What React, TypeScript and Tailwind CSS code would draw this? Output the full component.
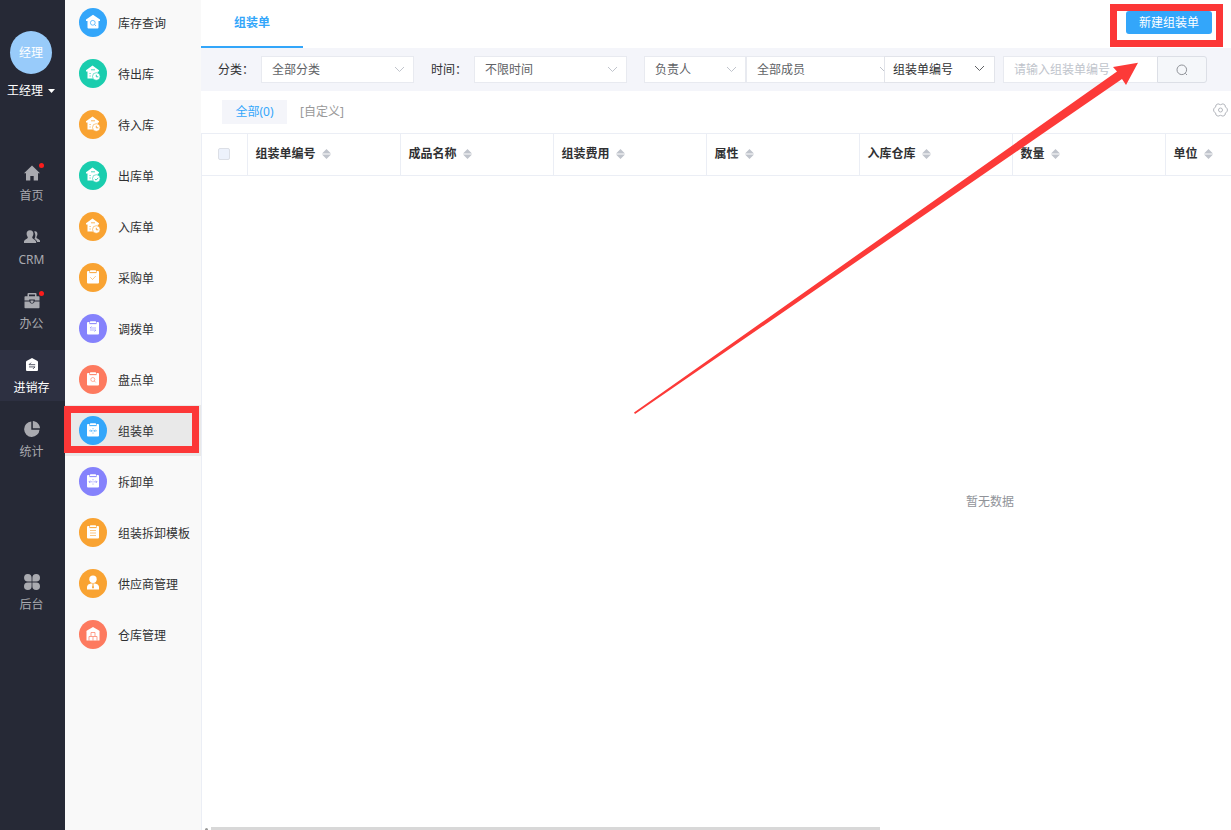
import { ReactNode } from "react";

type Glyph = "houseSearch" | "houseOut" | "houseIn" | "houseCheck" | "houseClock" | "check" | "swap" | "search" | "merge" | "split" | "lines" | "person" | "depot";

const BLUE = "bg-[#33a6fa] text-[#33a6fa]";
const GREEN = "bg-[#1acdae] text-[#1acdae]";
const ORANGE = "bg-[#f9a332] text-[#f9a332]";
const PURPLE = "bg-[#8582fc] text-[#8582fc]";
const CORAL = "bg-[#fd7a5f] text-[#fd7a5f]";

const menu: { label: string; glyph: Glyph; color: string; active?: boolean }[] = [
  { label: "库存查询", glyph: "houseSearch", color: BLUE },
  { label: "待出库", glyph: "houseOut", color: GREEN },
  { label: "待入库", glyph: "houseIn", color: ORANGE },
  { label: "出库单", glyph: "houseCheck", color: GREEN },
  { label: "入库单", glyph: "houseClock", color: ORANGE },
  { label: "采购单", glyph: "check", color: ORANGE },
  { label: "调拨单", glyph: "swap", color: PURPLE },
  { label: "盘点单", glyph: "search", color: CORAL },
  { label: "组装单", glyph: "merge", color: BLUE, active: true },
  { label: "拆卸单", glyph: "split", color: PURPLE },
  { label: "组装拆卸模板", glyph: "lines", color: ORANGE },
  { label: "供应商管理", glyph: "person", color: ORANGE },
  { label: "仓库管理", glyph: "depot", color: CORAL },
];

const columns = ["组装单编号", "成品名称", "组装费用", "属性", "入库仓库", "数量", "单位", "", "", ""];

/* White shapes; cut-outs are drawn in currentColor, the colour of the round badge */
const boardMarks: Partial<Record<Glyph, ReactNode>> = {
  check: <path d="M5.300 8.300l2.200 2.200 3.300-3.500" />,
  swap: <path d="M11 8H5l1.600-1.600M5 10h6l-1.600 1.600" />,
  search: <><circle cx="7.800" cy="8.500" r="2" /><path d="M9.300 10l1.400 1.400" /></>,
  merge: <><path d="M8 6v1.300M8 8.200v1.300M8 10.500v1.200" /><path d="M4 8.800h3M5.700 7.600l1.200 1.200-1.200 1.200M12 8.800H9M10.300 7.600L9.100 8.800l1.200 1.200" /></>,
  split: <><path d="M8 6v1.300M8 8.200v1.300M8 10.500v1.200" /><path d="M4 8.800h3M5.200 7.600L4 8.800l1.200 1.200M12 8.800H9M10.800 7.600L12 8.800l-1.200 1.200" /></>,
  lines: <path d="M5 6.500h6M5 9h6M5 11.500h6" />,
};

const badgeMarks: Partial<Record<Glyph, ReactNode>> = {
  houseOut: <path d="M11.300 9.800v2h2" />,
  houseIn: <path d="M11.300 9.800v2h2" />,
  houseCheck: <path d="M9.800 12l1.300 1.100 2.200-2.300" />,
  houseClock: <path d="M11.300 9.800v2h2" />,
};

function MenuGlyph({ name }: { name: Glyph }) {
  const svg = "size-4";
  if (boardMarks[name]) {
    return (
      <svg className={svg} viewBox="0 0 16 16" fill="none">
        <path d="M3 2h2v2h6V2h2a1 1 0 011 1v10.500a1 1 0 01-1 1H3a1 1 0 01-1-1V3a1 1 0 011-1z" fill="#fff" />
        <path d="M5.600 1.200h4.800a.6.6 0 01.6.6v1.400H5V1.800a.6.6 0 01.6-.6z" fill="#fff" />
        <g stroke="currentColor" strokeWidth="0.6">
          <path d="M4.500 1.500v2.200h7V1.500" />
          {boardMarks[name]}
        </g>
      </svg>
    );
  }
  if (badgeMarks[name]) {
    return (
      <svg className={svg} viewBox="0 0 16 16" fill="none">
        <path d="M7.500 .6L14 5.200v1.300h-1.200V13.500H2.500V6.500H1V5.200z" fill="#fff" />
        <path d="M6 4.800h4M4.500 8.500h1.200M4.500 11h1.200" stroke="currentColor" strokeWidth="0.8" />
        <circle cx="11.300" cy="11.500" r="3.800" fill="#fff" stroke="currentColor" strokeWidth="0.6" />
        <g stroke="currentColor" strokeWidth="0.9">{badgeMarks[name]}</g>
      </svg>
    );
  }
  if (name === "houseSearch") {
    return (
      <svg className={svg} viewBox="0 0 16 16" fill="none">
        <path d="M8 .8l7 4.800v1.400h-1.500v6.500a1 1 0 01-1 1h-9a1 1 0 01-1-1V7H1V5.600z" fill="#fff" />
        <circle cx="7.800" cy="8.800" r="2.400" stroke="currentColor" strokeWidth="0.7" />
        <path d="M9.500 10.500l1.500 1.500" stroke="currentColor" strokeWidth="0.7" />
      </svg>
    );
  }
  if (name === "person") {
    return (
      <svg className={svg} viewBox="0 0 16 16" fill="#fff">
        <circle cx="8" cy="4.300" r="3.700" />
        <path d="M2 14.500V12C2 9.800 4 8.800 6 8.400h4c2 .4 4 1.400 4 3.600v2.500z" />
        <path d="M7.300 8.800h1.400l-.3 1.200.6 2.600-1 1.200-1-1.200.6-2.600z" fill="currentColor" />
      </svg>
    );
  }
  return (
    <svg className={svg} viewBox="0 0 16 16" fill="none">
      <path d="M1.500 14.500V5.200q0-.5.500-.8L8 1l6 3.400q.5.300.5.800v9.300z" fill="#fff" />
      <path d="M4 14.500v-4h8v4M8 14.500v-4M6 10.500v-4h4v4" stroke="currentColor" strokeWidth="0.7" />
    </svg>
  );
}

function NavItem({ label, dot, active, children }: { label: string; dot?: boolean; active?: boolean; children: ReactNode }) {
  return (
    <a href="#" className={`relative flex h-[51px] flex-col items-center pt-[7px] pr-0.5 text-xs ${active ? "bg-[#2d3041] text-white" : "text-[#a9aab0]"}`}>
      <svg className="size-4" viewBox="0 0 16 16" fill="currentColor">{children}</svg>
      {dot && <span className="absolute top-[5px] left-[39px] size-[5px] rounded-full bg-[#fb1c1c]" />}
      <span className="mt-[7px] leading-4">{label}</span>
    </a>
  );
}

function Chevron({ className }: { className: string }) {
  return (
    <svg className={`pointer-events-none absolute h-[7px] w-[11px] ${className}`} viewBox="0 0 11 7" fill="none" stroke="currentColor">
      <path d="M1 1l4.500 4.500L10 1" />
    </svg>
  );
}

function Picker({ id, value, width, label }: { id: string; value: string; width: string; label?: string }) {
  return (
    <div className={`relative shrink-0 ${width}`}>
      <select id={id} aria-label={label} className="block h-[27px] w-full appearance-none border border-[#e8eaf0] bg-white pl-2.5 text-[#606266] outline-none">
        <option>{value}</option>
      </select>
      <Chevron className="top-[10px] right-[9px] text-[#c0c4cc]" />
    </div>
  );
}

export default function App() {
  return (
    <div className="flex h-screen overflow-hidden bg-white font-['Noto_Sans','Noto_Sans_CJK_SC',sans-serif] text-xs text-[#303133]">
      {/* Primary navigation */}
      <nav className="flex w-[65px] shrink-0 flex-col bg-[#262936]">
        <div className="mt-[31px] ml-[10px] flex h-[43px] w-[42px] items-center justify-center rounded-[50%] bg-[#98cbfa] text-white">经理</div>
        <button className="mt-2 flex h-[18px] items-center gap-[5px] pl-[7px] text-white">
          王经理
          <svg className="h-1 w-[7px]" viewBox="0 0 7 4" fill="currentColor"><path d="M0 0h7L3.500 4z" /></svg>
        </button>
        <div className="mt-[58px] flex flex-col gap-[13px]">
          <NavItem label="首页" dot>
            <path d="M8 .5L0 8.300h2V15.500h4.300V11h3.400v4.500H14V8.300h2z" />
          </NavItem>
          <NavItem label="CRM">
            <path d="M10.200 2.500c2-.8 3.400.7 3.200 2.800-.1 1.600-.9 2.300-1 3.200 0 1.400 4.100 1.500 4.100 4.500h-3.300c-.4-2-2.600-2.500-2.700-3.400.9-1.400 1.400-3.600-.3-7.100z" />
            <path d="M6 1.200c2.300 0 3.500 1.500 3.400 3.700-.1 1.700-1.200 2.600-1.200 3.700 0 1.600 4 1.700 4.100 5.400H-.5c.1-3.700 4.300-3.800 4.300-5.400 0-1.100-1.100-2-1.200-3.700C2.500 2.700 3.700 1.200 6 1.200z" />
          </NavItem>
          <NavItem label="办公" dot>
            <path d="M4.500 0h7a1 1 0 011 1v2.200H11V1.500H5v1.700H3.500V1a1 1 0 011-1zM1.300 3.200h13.400a.8.800 0 01.8.8v3.500h-4.700V6.500H5.200v1H.5V4a.8.800 0 01.8-.8zM.5 8.500h5c.4 2.800 4.600 2.800 5 0h5V14.500a.8.800 0 01-.8.800H1.300a.8.800 0 01-.8-.8z" />
            <path d="M6.500 7.500h3v1.200c0 1.600-3 1.600-3 0z" />
          </NavItem>
          <NavItem label="进销存" active>
            <path d="M8 1l5.500 3q.5.300.5 1v8a1 1 0 01-1 1H3a1 1 0 01-1-1V5q0-.7.500-1z" />
            <path d="M11.200 7.700H5l2-2M5 9.900h6l-2 2" fill="none" stroke="#2d3041" strokeWidth="0.8" />
          </NavItem>
          <NavItem label="统计">
            <path d="M7.300.5v8.200h8.200A7.700 7.700 0 117.300.5z" />
            <path d="M8.800 0c3.800.2 7 3.400 7.200 7.200H8.800z" />
          </NavItem>
        </div>
        <div className="mt-[102px]">
          <NavItem label="后台">
            <path d="M3.900 0a3.800 3.800 0 013.700 3.800v3.800H3.800A3.800 3.800 0 013.900 0zM12.200 0a3.800 3.800 0 010 7.600H8.400V3.800A3.800 3.800 0 0112.200 0zM3.800 8.400h3.800v3.800a3.800 3.800 0 11-3.800-3.800zM8.400 8.400h3.800a3.800 3.800 0 11-3.800 3.800z" />
          </NavItem>
        </div>
      </nav>

      {/* Module menu */}
      <aside className="w-[136px] shrink-0 bg-[#f9f9f9]">
        <ul className="-mt-[3px]">
          {menu.map(item => (
            <li key={item.label} className={`relative ${item.active ? "bg-[#e9e9e9]" : ""}`}>
              <a href="#" className="flex h-[51px] items-center gap-[11px] pl-3.5 whitespace-nowrap">
                <span className={`flex h-[29px] w-7 shrink-0 items-center justify-center rounded-[50%] pb-0.5 ${item.color}`}>
                  <MenuGlyph name={item.glyph} />
                </span>
                <span className="pt-0.5">{item.label}</span>
              </a>
              {item.active && <span className="pointer-events-none absolute top-px -left-px z-10 h-[47px] w-[135px] border-[7px] border-[#fc3737]" />}
            </li>
          ))}
        </ul>
      </aside>

      <main className="relative flex min-w-0 flex-1 flex-col">
        {/* Tab header */}
        <header className="flex h-12 shrink-0 items-start justify-between">
          <a href="#" className="flex h-12 w-[102px] items-center justify-center border-b-2 border-[#33a6fa] font-bold text-[#33a6fa]">组装单</a>
          <div className="relative mt-[11px] mr-[19px]">
            <button className="block h-[23px] w-[86px] rounded-[3px] bg-[#33a6fa] text-white">新建组装单</button>
            <span className="pointer-events-none absolute -top-[7px] -left-4 h-[43px] w-[113px] border-[7px] border-[#fc3737]" />
          </div>
        </header>

        {/* Filters */}
        <div className="flex h-[43px] shrink-0 items-center bg-[#f4f5fa] pl-[17px]">
          <label htmlFor="category" className="w-[43px] shrink-0">分类：</label>
          <Picker id="category" value="全部分类" width="w-[153px]" />
          <label htmlFor="time" className="ml-[17px] w-[43px] shrink-0">时间：</label>
          <Picker id="time" value="不限时间" width="w-[153px]" />
          <div className="ml-[17px] flex">
            <Picker id="role" label="角色" value="负责人" width="w-[102px]" />
            <Picker id="member" label="成员" value="全部成员" width="w-[153px]" />
          </div>
          <div className="relative -ml-[15px] w-[111px] shrink-0">
            <select aria-label="搜索字段" className="block h-[27px] w-full appearance-none border border-[#e2e4ea] bg-white pl-2 outline-none">
              <option>组装单编号</option>
            </select>
            <Chevron className="top-[9px] right-[10px] text-[#606266]" />
          </div>
          <div className="ml-2 flex">
            <input type="text" aria-label="组装单编号" placeholder="请输入组装单编号" className="h-[27px] w-[154px] border border-r-0 border-[#e8eaf0] bg-white pl-2.5 outline-none placeholder:text-[#c0c4cc]" />
            <button aria-label="搜索" className="flex h-[27px] w-[50px] items-center justify-center rounded-r-[3px] border border-[#dcdfe6] bg-[#f5f7fa] text-[#909399]">
              <svg className="size-3" viewBox="0 0 12 12" fill="none" stroke="currentColor"><circle cx="5.800" cy="5.800" r="4.800" /><path d="M9.300 9.300l1.700 1.700" /></svg>
            </button>
          </div>
        </div>

        {/* Views */}
        <div className="flex h-[42px] shrink-0 items-center pl-[21px]">
          <button className="h-6 w-[65px] bg-[#f4f5fa] text-[#33a6fa]">全部(0)</button>
          <button className="ml-[13px] text-[#999]">[自定义]</button>
          <button aria-label="列设置" className="mr-[3px] mb-1 ml-auto text-[#b4b7bd]">
            <svg className="h-[14px] w-[15px]" viewBox="0 0 15 14" fill="none" stroke="currentColor" strokeLinejoin="round">
              <path d="M5 .8Q7.500 2.600 10 .8L12 2q-.3 2.500 2.300 3.600v2.800Q11.700 9.500 12 12l-2 1.200q-2.500-1.800-5 0L3 12Q3.300 9.500.7 8.400V5.600Q3.300 4.500 3 2z" />
              <circle cx="7.500" cy="7" r="2" />
            </svg>
          </button>
        </div>

        {/* Table, wider than the pane */}
        <div className="flex min-h-0 flex-1 flex-col overflow-hidden border-l border-[#ebeef5]">
          <table className="w-[1575px] table-fixed border-collapse">
            <thead>
              <tr className="h-[42px] border-y border-[#ebeef5]">
                <th className="w-[45px] border-r border-[#ebeef5] p-0 pb-0.5">
                  <input type="checkbox" aria-label="全选" className="mx-auto block size-3 appearance-none rounded-[2px] border border-[#dcdfe6] bg-[#edf2fc]" />
                </th>
                {columns.map((name, i) => (
                  <th key={i} className="w-[153px] border-r border-[#ebeef5] p-0 pb-0.5 pl-2 text-left font-bold">
                    {name && (
                      <span className="flex items-center gap-1.5">
                        {name}
                        <svg className="h-[10px] w-[9px]" viewBox="0 0 9 10" fill="#c0c4cc"><path d="M4.500 0L9 4.500H0zM0 5.500h9L4.500 10z" /></svg>
                      </span>
                    )}
                  </th>
                ))}
              </tr>
            </thead>
          </table>
          <div className="flex w-[1576px] flex-1 items-center justify-center text-[#909399]">暂无数据</div>
          <div className="flex h-[3px] shrink-0 items-end">
            <span className="ml-[3px] h-0.5 w-[3px] rounded-t-full bg-[#999]" />
            <span className="ml-[3px] h-[3px] w-[65%] bg-[#d8d8d8]" />
          </div>
        </div>

        {/* Pointer to the create button */}
        <svg className="pointer-events-none absolute top-[62px] right-[92px] h-[352px] w-[506px]" viewBox="0 0 506 352" fill="#fc3a38">
          <path d="M1 350.500L484 9.500l-4-4.500L505 .8 493 23 489 17 2 352z" />
        </svg>
      </main>
    </div>
  );
}
